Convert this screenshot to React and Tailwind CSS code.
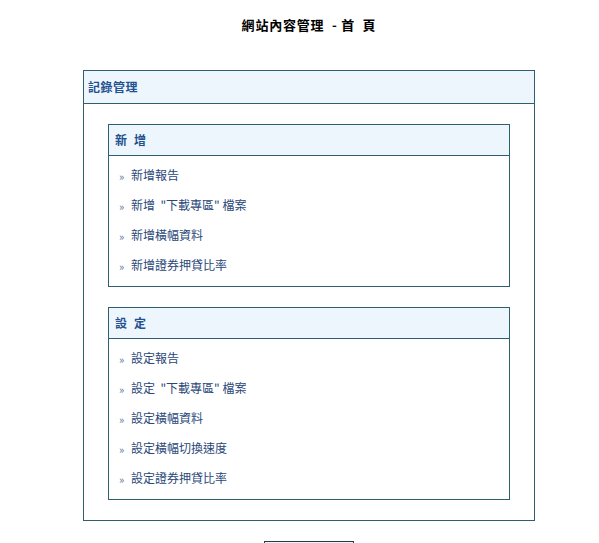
import React from "react";

const font = { fontFamily: '"Noto Sans CJK TC", "Noto Sans", sans-serif' };

function Section({ title, items }) {
  return (
    <div className="border border-[#2f5f6e] bg-white">
      <div className="h-[31px] bg-[#eef6fd] border-b border-[#2f5f6e] flex items-center pl-[6px] text-[12px] font-bold text-[#23508f] leading-none">
        <span className="mr-[7px]">{title[0]}</span>
        <span>{title[1]}</span>
      </div>
      <div className="pt-[4px] pb-[6px]">
        {items.map((t) => (
          <div key={t} className="h-[30px] flex items-center pl-[10px] text-[12px] text-[#2a4878] leading-none whitespace-pre">
            <span className="text-[11px] text-[#5a7298] w-[12px] relative top-[1px]">»</span>
            <span>{t}</span>
          </div>
        ))}
      </div>
    </div>
  );
}

export default function App() {
  return (
    <div className="bg-white min-h-[543px] w-[599px]" style={font}>
      <div className="ml-[83px] w-[452px]">
        <div className="h-[70px] pt-[18px] text-center text-[13px] font-bold text-black leading-[14px] whitespace-pre tracking-[0.8px]">
          {"網站內容管理  - 首  頁"}
        </div>
        <div className="border border-[#2f5f6e]">
          <div className="h-[33px] bg-[#eef6fd] border-b border-[#2f5f6e] flex items-center pl-[4px] text-[12px] font-bold text-[#23508f] tracking-[0.5px] leading-none">
            記錄管理
          </div>
          <div className="px-[24px] pt-[20px] pb-[20px] flex flex-col gap-[20px]">
            <Section
              title={["新", "增"]}
              items={["新增報告", "新增  \"下載專區\" 檔案", "新增橫幅資料", "新增證券押貸比率"]}
            />
            <Section
              title={["設", "定"]}
              items={["設定報告", "設定  \"下載專區\" 檔案", "設定橫幅資料", "設定橫幅切換速度", "設定證券押貸比率"]}
            />
          </div>
        </div>
        <div className="flex justify-center pt-[20px]">
          <div className="w-[90px] h-[24px] border border-[#1f3f4e] bg-[#f0f0f0]"></div>
        </div>
      </div>
    </div>
  );
}
